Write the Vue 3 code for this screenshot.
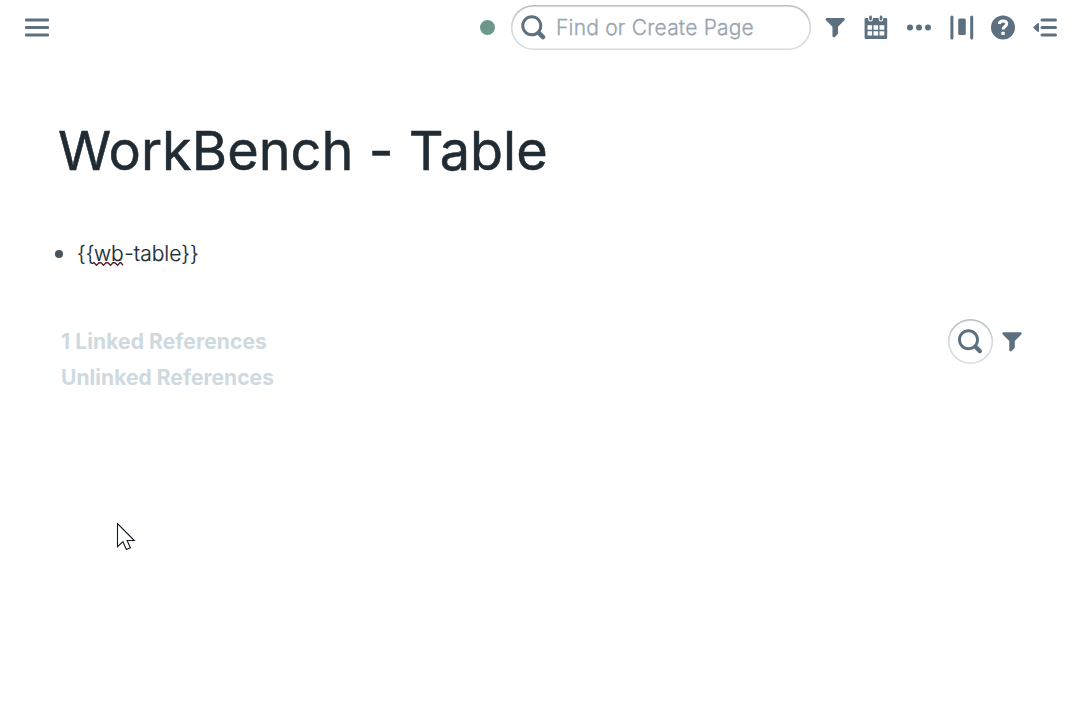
<script setup>
import { ref } from 'vue'

const query = ref('')
const openBraces = '{'.repeat(2)
const closeBraces = '}'.repeat(2)
const paths = {
  search: 'M15.55 13.43l-2.67-2.68a6.94 6.94 0 001.11-3.76c0-3.87-3.13-7-7-7s-7 3.13-7 7 3.13 7 7 7c1.39 0 2.68-.42 3.76-1.11l2.68 2.67a1.498 1.498 0 102.12-2.12zm-8.56-1.44c-2.76 0-5-2.24-5-5s2.24-5 5-5 5 2.24 5 5-2.24 5-5 5z',
  filter: 'M13.99.99h-12a1.003 1.003 0 00-.71 1.71l4.71 4.71V14c0 .55.45 1 1 1 .28 0 .53-.11.71-.29l2-2c.18-.18.29-.43.29-.71V7.41L14.7 2.7a1.003 1.003 0 00-.71-1.71z'
}
</script>

<template>
  <div class="app">
    <header class="topbar">
      <svg class="icon" viewBox="0 0 24 24">
        <rect x="0" y="3.5" width="24" height="3" rx="1" />
        <rect x="0" y="11" width="24" height="3" rx="1" />
        <rect x="0" y="18.5" width="24" height="3" rx="1" />
      </svg>
      <span class="status"></span>
      <label class="search">
        <svg class="icon" viewBox="0 0 16 16"><path :d="paths.search" transform="translate(.2 .25)" /></svg>
        <input v-model="query" type="text" placeholder="Find or Create Page" />
      </label>
      <nav class="tools">
        <svg class="funnel" viewBox="0 0 20 20"><path :d="paths.filter" transform="translate(-.8 -.4) scale(1.38)" /></svg>
        <svg class="icon calendar" viewBox="0 0 24 24">
          <path fill-rule="evenodd" d="M2 2.5h2.2v1.3a2.3 2.3 0 004.6 0V2.5h5.9v1.3a2.3 2.3 0 004.6 0V2.5H22a1.2 1.2 0 011.2 1.2v18.6A1.2 1.2 0 0122 23.5H1.8a1.2 1.2 0 01-1.2-1.2V3.7a1.2 1.2 0 011.2-1.2zM3.5 9.8v4.6h4.6V9.8zm6 0v4.6h4.6V9.8zm6 0v4.6h4.8V9.8zm-12 6v4.4h4.6v-4.4zm6 0v4.4h4.6v-4.4zm6 0v4.4h4.8v-4.4z" transform="translate(0 .4)" />
          <rect x="5.2" y=".6" width="2.7" height="4.8" rx="1.3" />
          <rect x="15.7" y=".6" width="2.7" height="4.8" rx="1.3" />
        </svg>
        <svg class="icon more" viewBox="0 0 24 24">
          <circle cx="3" cy="12.5" r="3" /><circle cx="12" cy="12.5" r="3" /><circle cx="21" cy="12.5" r="3" />
        </svg>
        <svg class="icon columns" viewBox="0 0 24 24">
          <rect x=".4" y=".4" width="3" height="24" rx="1.5" />
          <rect x="8.2" y="3.4" width="7.6" height="16.5" rx="1.5" />
          <rect x="20.2" y=".4" width="3" height="24" rx="1.5" />
        </svg>
        <svg class="icon help" viewBox="0 0 24 24">
          <g transform="translate(0 .4)">
            <circle cx="12" cy="12" r="12" />
            <path class="mark" d="M8.3 8.6C8.4 6.5 9.8 5.5 12.1 5.5c2.2 0 3.6 1.1 3.6 2.9 0 2.8-3.6 2.7-3.6 5.7" />
            <rect class="dot" x="10.4" y="16.4" width="3.3" height="3.2" rx=".4" />
          </g>
        </svg>
        <svg class="icon sidebar" viewBox="0 0 24 24">
          <rect x="7.5" y="3.6" width="16.5" height="3" rx="1.5" />
          <rect x="7.5" y="11.1" width="16.5" height="3" rx="1.5" />
          <rect x="7.5" y="18.6" width="16.5" height="3" rx="1.5" />
          <path d="M4.6 8.3L.5 11.9q-.7.6 0 1.2l4.1 3.6q1.4 1 1.4-.7V9q0-1.7-1.4-.7z" />
        </svg>
      </nav>
    </header>

    <main class="page">
      <h1>WorkBench - Table</h1>
      <div class="block">
        <span class="bullet"></span>
        <span class="block-text">{{ openBraces }}<span class="misspelled">wb<svg class="squiggle" viewBox="0 0 30 4"><path d="M0 .8h1l2.5 2.4L6 .8h2l2.5 2.4L13 .8h2l2.5 2.4L20 .8h2l2.5 2.4L27 .8h1l2 2.4" /></svg></span>-table{{ closeBraces }}</span>
      </div>
      <section class="references">
        <div class="headings">
          <div class="linked">1 Linked References</div>
          <div>Unlinked References</div>
        </div>
        <div class="ref-tools">
          <span class="round"><svg class="icon" viewBox="0 0 16 16"><path :d="paths.search" transform="translate(0 .2)" /></svg></span>
          <svg class="funnel" viewBox="0 0 20 20"><path :d="paths.filter" transform="translate(-1 -.2) scale(1.38)" /></svg>
        </div>
      </section>
    </main>

    <svg class="cursor" viewBox="0 0 20 30">
      <path d="M1.5 1.5v23.2l5.4-5 3.5 7.8 4-1.7-3.3-7.3h7.2z" />
    </svg>
  </div>
</template>

<style>
body { background: #fff; }
</style>

<style scoped>
.app {
  position: relative;
  height: 719px;
  overflow: hidden;
  font-family: Inter, "Liberation Sans", sans-serif;
  color: #202b33;
}
svg { display: block; flex: none; fill: #5c7080; overflow: visible; }
.icon { width: 24px; height: 24px; margin-bottom: 1px; }
.topbar {
  display: flex;
  align-items: center;
  height: 45px;
  padding: 5px 22px 0 25px;
}
.status {
  width: 15px;
  height: 15px;
  margin-left: auto;
  margin-right: 16px;
  border-radius: 50%;
  background: #6b988b;
}
.search {
  display: flex;
  align-items: center;
  box-sizing: border-box;
  width: 300px;
  height: 45px;
  padding-left: 10px;
  border-radius: 23px;
  box-shadow: inset 0 0 0 1.5px rgba(40, 60, 75, .18), inset 0 1.5px 1.5px rgba(40, 60, 75, .2);
}
.search input {
  width: 230px;
  margin-left: 11px;
  padding: 0;
  border: 0;
  outline: 0;
  background: transparent;
  font: 300 21px Inter, sans-serif;
  letter-spacing: .2px;
}
.search input::placeholder {
  color: #98a5b0;
  opacity: 1;
  -webkit-text-stroke: .3px #98a5b0;
}
.tools { display: flex; align-items: center; }
.funnel { width: 20px; height: 20px; margin-bottom: 1px; }
.tools .funnel { margin-left: 14px; }
.calendar { margin-left: 19px; }
.more { margin-left: 19px; }
.columns { margin-left: 19px; }
.help { margin-left: 17px; }
.sidebar { margin-left: 18px; }
.mark { fill: none; stroke: #fff; stroke-width: 3; }
.dot { fill: #fff; }
.page { padding: 0 57px 0 54px; }
h1 {
  margin: 66px 0 0 4px;
  font-size: 54px;
  line-height: 70px;
  font-weight: 400;
  letter-spacing: .03px;
  -webkit-text-stroke: .5px #202b33;
  white-space: nowrap;
}
.block {
  display: flex;
  align-items: center;
  height: 36px;
  margin-top: 50px;
}
.bullet {
  width: 8px;
  height: 8px;
  margin: 0 14px 0 1px;
  border-radius: 50%;
  background: #45545f;
}
.block-text {
  font-size: 21px;
  line-height: 26px;
  font-weight: 300;
  -webkit-text-stroke: .2px #202b33;
  white-space: nowrap;
}
.misspelled { position: relative; left: -.5px; }
.squiggle {
  position: absolute;
  left: -.5px;
  bottom: 0;
  width: 30px;
  height: 4px;
  fill: none;
  stroke: #55222e;
  stroke-width: 1.4;
}
.references {
  display: flex;
  justify-content: space-between;
  margin-top: 47px;
  padding-left: 7px;
}
.headings {
  padding-top: 5px;
  font-size: 21px;
  line-height: 36px;
  font-weight: 700;
  letter-spacing: .05px;
  color: #ced9e0;
}
.linked { letter-spacing: .11px; }
.ref-tools { display: flex; align-items: center; height: 45px; }
.round {
  display: flex;
  align-items: center;
  justify-content: center;
  box-sizing: border-box;
  width: 45px;
  height: 45px;
  padding-right: 1px;
  margin-right: 9px;
  border-radius: 50%;
  box-shadow: inset 0 0 0 1.5px rgba(40, 60, 75, .18), inset 0 1.5px 1.5px rgba(40, 60, 75, .2);
}
.cursor {
  position: absolute;
  left: 116px;
  top: 522px;
  width: 20px;
  height: 30px;
  fill: #fff;
  stroke: #111820;
  stroke-width: 1.1;
}
</style>
